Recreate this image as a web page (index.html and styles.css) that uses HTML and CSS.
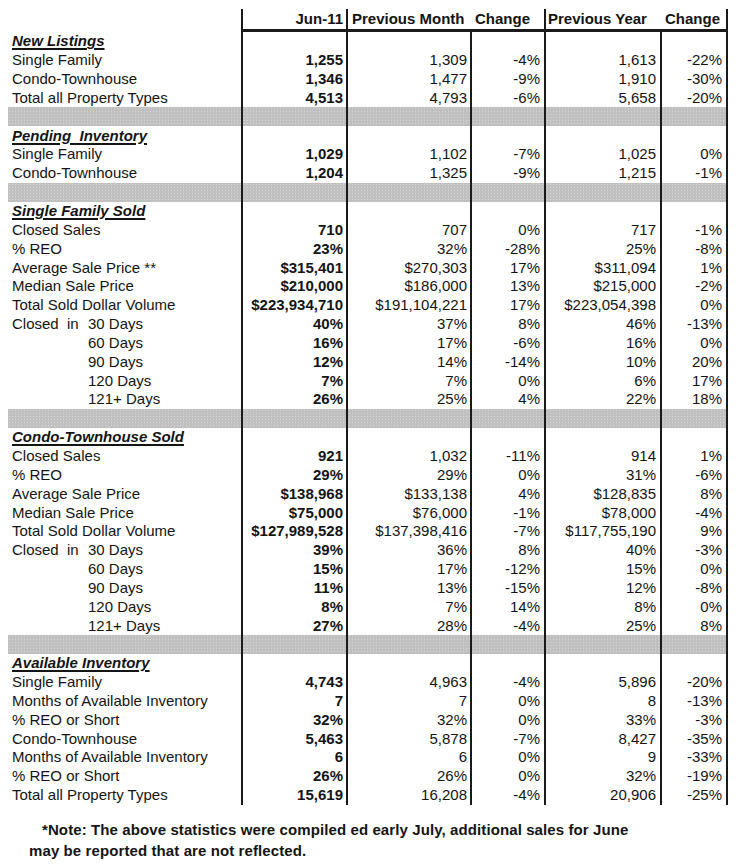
FILE: index.html
```html
<!DOCTYPE html>
<html>
<head>
<meta charset="utf-8">
<link rel="stylesheet" href="styles.css">
</head>
<body>
<div class="page">
<table class="stats">
  <colgroup>
    <col class="c1"><col class="c2"><col class="c3"><col class="c4"><col class="c5"><col class="c6">
  </colgroup>
  <thead>
    <tr>
      <th class="hl"></th>
      <th class="h2">Jun-11</th>
      <th class="h3">Previous Month</th>
      <th class="h4">Change</th>
      <th class="h5">Previous Year</th>
      <th class="h6">Change</th>
    </tr>
  </thead>
  <tbody>
    <tr class="sec"><td><span>New Listings</span></td><td></td><td></td><td></td><td></td><td></td></tr>
    <tr><td>Single Family</td><td>1,255</td><td>1,309</td><td>-4%</td><td>1,613</td><td>-22%</td></tr>
    <tr><td>Condo-Townhouse</td><td>1,346</td><td>1,477</td><td>-9%</td><td>1,910</td><td>-30%</td></tr>
    <tr><td>Total all Property Types</td><td>4,513</td><td>4,793</td><td>-6%</td><td>5,658</td><td>-20%</td></tr>
    <tr class="band"><td></td><td></td><td></td><td></td><td></td><td></td></tr>

    <tr class="sec"><td><span>Pending&nbsp; Inventory</span></td><td></td><td></td><td></td><td></td><td></td></tr>
    <tr><td>Single Family</td><td>1,029</td><td>1,102</td><td>-7%</td><td>1,025</td><td>0%</td></tr>
    <tr><td>Condo-Townhouse</td><td>1,204</td><td>1,325</td><td>-9%</td><td>1,215</td><td>-1%</td></tr>
    <tr class="band"><td></td><td></td><td></td><td></td><td></td><td></td></tr>

    <tr class="sec"><td><span>Single Family Sold</span></td><td></td><td></td><td></td><td></td><td></td></tr>
    <tr><td>Closed Sales</td><td>710</td><td>707</td><td>0%</td><td>717</td><td>-1%</td></tr>
    <tr><td>% REO</td><td>23%</td><td>32%</td><td>-28%</td><td>25%</td><td>-8%</td></tr>
    <tr><td>Average Sale Price **</td><td>$315,401</td><td>$270,303</td><td>17%</td><td>$311,094</td><td>1%</td></tr>
    <tr><td>Median Sale Price</td><td>$210,000</td><td>$186,000</td><td>13%</td><td>$215,000</td><td>-2%</td></tr>
    <tr><td>Total Sold Dollar Volume</td><td>$223,934,710</td><td>$191,104,221</td><td>17%</td><td>$223,054,398</td><td>0%</td></tr>
    <tr><td><span class="w1">Closed</span><span class="w2">in</span>30 Days</td><td>40%</td><td>37%</td><td>8%</td><td>46%</td><td>-13%</td></tr>
    <tr><td class="days">60 Days</td><td>16%</td><td>17%</td><td>-6%</td><td>16%</td><td>0%</td></tr>
    <tr><td class="days">90 Days</td><td>12%</td><td>14%</td><td>-14%</td><td>10%</td><td>20%</td></tr>
    <tr><td class="days">120 Days</td><td>7%</td><td>7%</td><td>0%</td><td>6%</td><td>17%</td></tr>
    <tr><td class="days">121+ Days</td><td>26%</td><td>25%</td><td>4%</td><td>22%</td><td>18%</td></tr>
    <tr class="band"><td></td><td></td><td></td><td></td><td></td><td></td></tr>

    <tr class="sec"><td><span>Condo-Townhouse Sold</span></td><td></td><td></td><td></td><td></td><td></td></tr>
    <tr><td>Closed Sales</td><td>921</td><td>1,032</td><td>-11%</td><td>914</td><td>1%</td></tr>
    <tr><td>% REO</td><td>29%</td><td>29%</td><td>0%</td><td>31%</td><td>-6%</td></tr>
    <tr><td>Average Sale Price</td><td>$138,968</td><td>$133,138</td><td>4%</td><td>$128,835</td><td>8%</td></tr>
    <tr><td>Median Sale Price</td><td>$75,000</td><td>$76,000</td><td>-1%</td><td>$78,000</td><td>-4%</td></tr>
    <tr><td>Total Sold Dollar Volume</td><td>$127,989,528</td><td>$137,398,416</td><td>-7%</td><td>$117,755,190</td><td>9%</td></tr>
    <tr><td><span class="w1">Closed</span><span class="w2">in</span>30 Days</td><td>39%</td><td>36%</td><td>8%</td><td>40%</td><td>-3%</td></tr>
    <tr><td class="days">60 Days</td><td>15%</td><td>17%</td><td>-12%</td><td>15%</td><td>0%</td></tr>
    <tr><td class="days">90 Days</td><td>11%</td><td>13%</td><td>-15%</td><td>12%</td><td>-8%</td></tr>
    <tr><td class="days">120 Days</td><td>8%</td><td>7%</td><td>14%</td><td>8%</td><td>0%</td></tr>
    <tr><td class="days">121+ Days</td><td>27%</td><td>28%</td><td>-4%</td><td>25%</td><td>8%</td></tr>
    <tr class="band"><td></td><td></td><td></td><td></td><td></td><td></td></tr>

    <tr class="sec"><td><span>Available Inventory</span></td><td></td><td></td><td></td><td></td><td></td></tr>
    <tr><td>Single Family</td><td>4,743</td><td>4,963</td><td>-4%</td><td>5,896</td><td>-20%</td></tr>
    <tr><td>Months of Available Inventory</td><td>7</td><td>7</td><td>0%</td><td>8</td><td>-13%</td></tr>
    <tr><td>% REO or Short</td><td>32%</td><td>32%</td><td>0%</td><td>33%</td><td>-3%</td></tr>
    <tr><td>Condo-Townhouse</td><td>5,463</td><td>5,878</td><td>-7%</td><td>8,427</td><td>-35%</td></tr>
    <tr><td>Months of Available Inventory</td><td>6</td><td>6</td><td>0%</td><td>9</td><td>-33%</td></tr>
    <tr><td>% REO or Short</td><td>26%</td><td>26%</td><td>0%</td><td>32%</td><td>-19%</td></tr>
    <tr><td>Total all Property Types</td><td>15,619</td><td>16,208</td><td>-4%</td><td>20,906</td><td>-25%</td></tr>
  </tbody>
</table>
<p class="note">*Note: The above statistics were compiled ed early July, additional sales for June<br>may be reported that are not reflected.</p>
</div>
</body>
</html>
```

FILE: styles.css
```css
html, body {
  margin: 0;
  padding: 0;
  background: #ffffff;
}

body {
  font-family: "Liberation Sans", Arial, sans-serif;
  color: #141414;
}

.page {
  padding: 9px 0 0 8px;
  width: 730px;
}

.stats {
  border-collapse: separate;
  border-spacing: 0;
  table-layout: fixed;
  width: 720px;
  font-size: 15px;
}

.c1 { width: 235px; }
.c2 { width: 105px; }
.c3 { width: 124px; }
.c4 { width: 74px; }
.c5 { width: 116px; }
.c6 { width: 66px; }

.stats th {
  height: 20px;
  padding: 0;
  font-weight: bold;
  line-height: 20px;
  vertical-align: middle;
  white-space: nowrap;
}

.stats th.hl { border-right: 2px solid #1a1a1a; }
.stats th.h2 {
  text-align: right;
  padding-right: 3px;
  border-right: 2px solid #1a1a1a;
  border-bottom: 3px solid #1a1a1a;
}
.stats th.h3 {
  text-align: left;
  padding-left: 4px;
  border-bottom: 3px solid #1a1a1a;
}
.stats th.h4 {
  text-align: left;
  padding-left: 3px;
  border-right: 2px solid #1a1a1a;
  border-bottom: 3px solid #1a1a1a;
}
.stats th.h5 {
  text-align: left;
  padding-left: 2px;
  border-bottom: 3px solid #1a1a1a;
}
.stats th.h6 {
  text-align: left;
  padding-left: 3px;
  border-right: 2px solid #1a1a1a;
  border-bottom: 3px solid #1a1a1a;
}

.stats td {
  height: 18.85px;
  padding: 0 3px 0 0;
  line-height: 18px;
  text-align: right;
  white-space: nowrap;
  border-right: 2px solid #1a1a1a;
  vertical-align: middle;
}

.stats td:first-child {
  text-align: left;
  padding-left: 4px;
}

.stats td:nth-child(2) {
  font-weight: bold;
  padding-right: 3px;
}

.stats td:nth-child(4),
.stats td:nth-child(5),
.stats td:nth-child(6) {
  padding-right: 4px;
}

.stats td.days {
  padding-left: 80px;
}

.w1 {
  display: inline-block;
  width: 55px;
}

.w2 {
  display: inline-block;
  width: 21px;
}

.sec td span {
  font-weight: bold;
  font-style: italic;
  text-decoration: underline;
  text-decoration-thickness: 1.5px;
  text-underline-offset: 2px;
}

.band td {
  background-color: #c0c0c0;
  background-image: radial-gradient(circle, #d6d6d6 0.6px, transparent 0.9px);
  background-size: 3px 3px;
}

.note {
  margin: 14px 0 0 0;
  padding-left: 21px;
  text-indent: 13px;
  font-size: 15px;
  font-weight: bold;
  line-height: 21px;
  color: #151515;
  letter-spacing: 0.1px;
}
```
